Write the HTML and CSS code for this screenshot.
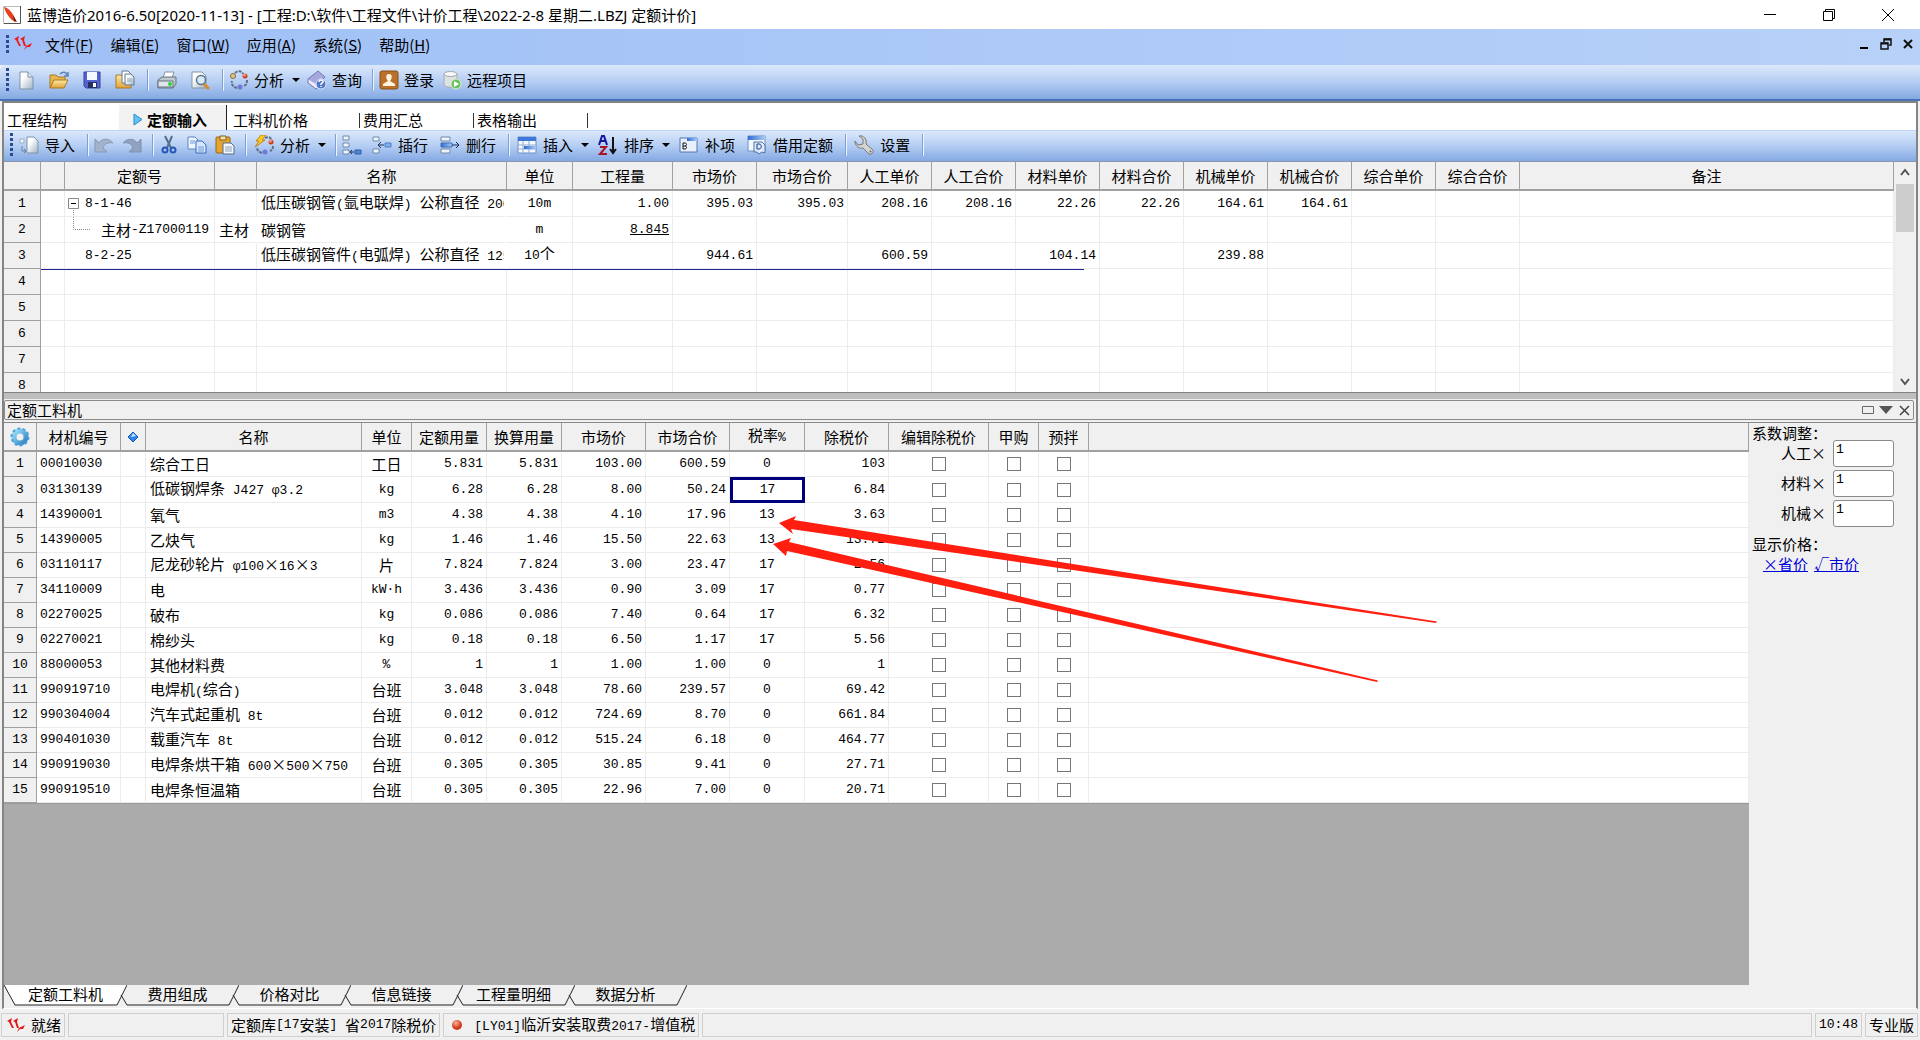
FILE: index.html
```html
<!DOCTYPE html>
<html lang="zh-CN">
<head>
<meta charset="utf-8">
<title>蓝博造价2016</title>
<link rel="stylesheet" href="styles.css">
</head>
<body>
<svg class="defs" width="0" height="0" aria-hidden="true">
  <defs>
    <linearGradient id="page" x1="0" y1="0" x2="1" y2="1"><stop offset=".3" stop-color="#fff"/><stop offset="1" stop-color="#9fb3c4"/></linearGradient>
    <linearGradient id="gold" x1="0" y1="0" x2="0" y2="1"><stop offset="0" stop-color="#ffe9a0"/><stop offset="1" stop-color="#e2a33a"/></linearGradient>
    <linearGradient id="blue" x1="0" y1="0" x2="1" y2="0"><stop offset="0" stop-color="#2f6bd0"/><stop offset="1" stop-color="#a9ccf5"/></linearGradient>
    <radialGradient id="ball" cx=".4" cy=".3"><stop offset="0" stop-color="#ffb59a"/><stop offset="1" stop-color="#cf3a1c"/></radialGradient>
    <linearGradient id="cog" x1="0" y1="0" x2="1" y2="1"><stop offset="0" stop-color="#9be0fa"/><stop offset="1" stop-color="#2f7fc4"/></linearGradient>
  </defs>
</svg>

<header class="titlebar">
  <svg class="app" viewBox="0 0 18 18"><path d="M.5.5h17v17H.5z" fill="#fff" stroke="#bbb"/><path d="M17.500 0v17.500H1" fill="none" stroke="#555"/><path d="M1 1c5 1 9 6 12 14l-1 1C7 13 3 8 1 1z" fill="#e8401c"/><path d="M10 9l4 7-3-1z" fill="#6b1d10"/></svg>
  <h1>蓝博造价2016-6.50[2020-11-13] - [工程:D:\软件\工程文件\计价工程\2022-2-8 星期二.LBZJ 定额计价]</h1>
  <div class="winbtns">
    <button aria-label="最小化"><svg viewBox="0 0 14 14"><path d="M1 6.500h12" stroke="#000"/></svg></button>
    <button aria-label="还原"><svg viewBox="0 0 14 14"><path d="M1.500 3.500h9v9h-9zM3.500 3V1.500h9v9H11" fill="none" stroke="#000"/></svg></button>
    <button aria-label="关闭"><svg viewBox="0 0 14 14"><path d="M1 1l12 12M13 1L1 13" stroke="#000"/></svg></button>
  </div>
</header>

<nav class="menubar">
  <span class="grip"></span>
  <svg class="logo" viewBox="0 0 18 16"><path d="M0 4l5-3-1 4 3 6h-2L2 5zM6 4l5-3-1 4 2 6h-2L8 5zM10 15l2-4 6-3-2 4-3 0z" fill="#f01818"/></svg>
  <button>文件(<u>F</u>)</button><button>编辑(<u>E</u>)</button><button>窗口(<u>W</u>)</button><button>应用(<u>A</u>)</button><button>系统(<u>S</u>)</button><button>帮助(<u>H</u>)</button>
  <div class="mdibtns">
    <button aria-label="最小化子窗口"><svg viewBox="0 0 12 12"><path d="M2 10h8" stroke="#000" stroke-width="2"/></svg></button>
    <button aria-label="还原子窗口"><svg viewBox="0 0 12 12"><path d="M4 4V1h7v6H9M1 5h7v6H1z" fill="none" stroke="#111" stroke-width="1.500"/><path d="M4 1.500h7M1 5.500h7" stroke="#111" stroke-width="2"/></svg></button>
    <button aria-label="关闭子窗口"><svg viewBox="0 0 12 12"><path d="M2 2l8 8M10 2l-8 8" stroke="#111" stroke-width="2"/></svg></button>
  </div>
</nav>

<div class="toolbar main">
  <span class="grip"></span>
  <button class="tool" aria-label="新建"><svg viewBox="0 0 20 20"><path d="M4 2h8l5 5v12H4z" fill="url(#page)" stroke="#7d93a8"/><path d="M12 2v5h5" fill="#dfe8f0" stroke="#7d93a8"/></svg></button>
  <button class="tool" aria-label="打开"><svg viewBox="0 0 20 20"><path d="M1 18V5h6l2 2h7v4" fill="#e9b64c" stroke="#a87a25"/><path d="M1 18l4-8h14l-4 8z" fill="url(#gold)" stroke="#a87a25"/><path d="M11 4c3-3 6-2 7 1m1-3v4h-4" fill="none" stroke="#5b83b5" stroke-width="1.500"/></svg></button>
  <button class="tool" aria-label="保存"><svg viewBox="0 0 20 20"><path d="M2 2h16v16H4l-2-2z" fill="#5662cf" stroke="#39419e"/><path d="M5 2h10v8H5z" fill="#f4f8ff"/><path d="M6 12h9v6H6z" fill="#26305f"/><path d="M11 13h3v4h-3z" fill="#fff"/></svg></button>
  <button class="tool" aria-label="另存"><svg viewBox="0 0 20 20"><path d="M1 18V5h5l2 2h8v11z" fill="url(#gold)" stroke="#a87a25"/><path d="M7 1h6l3 3v9H7z" fill="#fff" stroke="#66788c"/><path d="M10 4h6l3 3v8h-9z" fill="url(#page)" stroke="#66788c"/><path d="M12 9h5M12 11h5" stroke="#8fa5bb"/></svg></button>
  <span class="sep"></span>
  <button class="tool" aria-label="打印"><svg viewBox="0 0 20 20"><path d="M6 8l2-6h9l-2 6z" fill="#fff" stroke="#8495a5"/><path d="M1 10l4-3h14v7l-3 4H1z" fill="#bdc8d0" stroke="#65737f"/><path d="M1 11h15v6H1z" fill="#dfe5ea" stroke="#65737f"/><circle cx="13" cy="14" r="2" fill="#2fd43a"/></svg></button>
  <button class="tool" aria-label="打印预览"><svg viewBox="0 0 20 20"><path d="M2 2h10l4 4v12H2z" fill="url(#page)" stroke="#8495a5"/><circle cx="11" cy="10" r="4.500" fill="#d8ebf8" stroke="#5d7488" stroke-width="1.500"/><path d="M14 14l5 5" stroke="#d98a2b" stroke-width="3"/></svg></button>
  <span class="sep"></span>
  <button class="tool"><svg viewBox="0 0 20 20"><path d="M6 3c3-3 7-2 8 1M18 10c0 4-1 5-3 6M8 18c-4-1-6-4-5-7" fill="none" stroke="#5c6f88" stroke-width="2" stroke-dasharray="3 1"/><circle cx="4" cy="6" r="2.500" fill="#dfc58c" stroke="#8a6c38"/><circle cx="16" cy="6" r="2.500" fill="url(#ball)"/><circle cx="11" cy="17" r="2.500" fill="#7077d8"/></svg>分析</button><span class="drop"></span>
  <button class="tool"><svg viewBox="0 0 20 20"><path d="M1 9l10-8 7 6-9 9z" fill="#a5a8dc" stroke="#7478b2"/><path d="M1 9v4l8 6 3-3" fill="#e8eaf8" stroke="#7478b2"/><circle cx="14" cy="14" r="5" fill="#5275c8" stroke="#dfe8ff"/><path d="M12 12c0-3 5-2 4 0l-2 2v1m0 1v1" fill="none" stroke="#fff" stroke-width="1.500"/></svg>查询</button>
  <span class="sep"></span>
  <button class="tool"><svg viewBox="0 0 20 20"><rect x="1" y="1" width="18" height="18" rx="2" fill="#b9712c" stroke="#8d4e16"/><path d="M10 4c4 0 3 5 1 7l5 3v2H4v-2l5-3C7 9 6 4 10 4z" fill="#fff3df"/></svg>登录</button>
  <button class="tool"><svg viewBox="0 0 20 20"><path d="M2 4v11c2 3 11 3 13 0V4z" fill="#dfe2e4" stroke="#a4aaaf"/><ellipse cx="8.500" cy="4" rx="6.500" ry="2.500" fill="#f7f7f7" stroke="#a4aaaf"/><circle cx="14" cy="14" r="5" fill="#6fc060" stroke="#d9f0d0"/><path d="M12 11l5 3-5 3z" fill="#fff"/></svg>远程项目</button>
</div>

<main class="workspace">
  <nav class="tabs">
    <a href="#a">工程结构</a>
    <a href="#b" class="active"><svg viewBox="0 0 10 13"><path d="M1 1l8 5.500L1 12z" fill="#5ec6f5" stroke="#3484c6"/></svg>定额输入</a>
    <a href="#c" class="wide">工料机价格</a>
    <a href="#d">费用汇总</a>
    <a href="#e">表格输出</a>
  </nav>

  <div class="toolbar sub">
    <span class="grip"></span>
    <button class="tool"><svg viewBox="0 0 20 20"><path d="M8 2h7l4 4v12H8z" fill="url(#page)" stroke="#7d93a8"/><path d="M1 4h4v4H1z" fill="#eef4fb" stroke="#9eb0c4"/><path d="M3 11v5h4m-2-2l2 2-2 2" fill="none" stroke="#68809c"/></svg>导入</button>
    <span class="sep"></span>
    <button class="tool small" aria-label="撤销"><svg viewBox="0 0 20 20"><path d="M1 4v13h12l-4-4c1-4 5-6 10-5C15 3 8 3 5 8z" fill="#a3b3cc" stroke="#8798b2"/></svg></button>
    <button class="tool small" aria-label="重做"><svg viewBox="0 0 20 20"><path d="M19 4v13H7l4-4C10 9 6 7 1 8c4-5 11-5 14 0z" fill="#8fa2c0" stroke="#7f91ae"/></svg></button>
    <span class="sep"></span>
    <button class="tool small" aria-label="剪切"><svg viewBox="0 0 20 20"><path d="M6 1l6 12M13 1L8 13" stroke="#54708f" stroke-width="2"/><circle cx="6" cy="15" r="2.500" fill="none" stroke="#2758b8" stroke-width="2"/><circle cx="14" cy="15" r="2.500" fill="none" stroke="#2758b8" stroke-width="2"/></svg></button>
    <button class="tool small" aria-label="复制"><svg viewBox="0 0 20 20"><path d="M1 2h7l3 3v9H1z" fill="#eef5ff" stroke="#5b85c5"/><path d="M9 6h6l4 4v8H9z" fill="#d7e7ff" stroke="#3a68b5"/><path d="M3 6h5M3 8h5M11 12h6M11 14h6M11 16h6" stroke="#6f9ada"/></svg></button>
    <button class="tool small" aria-label="粘贴"><svg viewBox="0 0 20 20"><rect x="1" y="2" width="14" height="16" rx="1" fill="#e5a52c" stroke="#97661a"/><path d="M5 1h6v4H5z" fill="#f5e4a8" stroke="#7d6124"/><path d="M8 8h8l3 3v8H8z" fill="#f4f7fb" stroke="#566b88"/><path d="M10 12h7M10 14h7M10 16h7" stroke="#8ba0bc"/></svg></button>
    <span class="sep"></span>
    <button class="tool"><svg viewBox="0 0 20 20"><path d="M11 3c4-2 6 0 7 3M19 11c0 3-1 4-3 5M8 18c-3-1-5-3-5-5" fill="none" stroke="#5c6f88" stroke-width="2" stroke-dasharray="3 1"/><circle cx="17" cy="7" r="2.500" fill="url(#ball)"/><circle cx="11" cy="17" r="2.500" fill="#7077d8"/><path d="M7 0h5L8 5h3L1 12l4-6H2z" fill="#ffc928" stroke="#c0841a"/></svg>分析</button><span class="drop"></span>
    <span class="sep"></span>
    <button class="tool small" aria-label="插入子行"><svg viewBox="0 0 20 20"><path d="M1 1h6v4H1zM1 8h6v4H1zM1 15h6v4H1z" fill="#eef4fb" stroke="#7189a8"/><path d="M13 15h6v4h-6z" fill="#4d86da" stroke="#345d9d"/><path d="M12 17H8m2-2l-2 2 2 2" fill="none" stroke="#1c2f55"/></svg></button>
    <button class="tool"><svg viewBox="0 0 20 20"><path d="M1 2h6v4H1zM1 14h6v4H1z" fill="#eef4fb" stroke="#7189a8"/><path d="M13 8h6v4h-6z" fill="#7fb0ee" stroke="#4d7cc0"/><path d="M12 10H6m3-3l-3 3 3 3" fill="none" stroke="#1c2f55"/></svg>插行</button>
    <button class="tool"><svg viewBox="0 0 20 20"><path d="M1 2h9v4H1zM1 14h9v4H1z" fill="#eef4fb" stroke="#7189a8"/><path d="M1 8h11v4H1z" fill="url(#blue)" stroke="#3f6fba"/><path d="M12 10h7m-3-3l3 3-3 3" fill="none" stroke="#1c2f55"/></svg>删行</button>
    <span class="sep"></span>
    <button class="tool"><svg viewBox="0 0 20 20"><path d="M1 2h18v16H1z" fill="#f5f9ff" stroke="#6e8fc4"/><path d="M1 2h18v4H1z" fill="#3f78d8"/><path d="M6 6v12M12 6v12M1 10h18M1 14h18" stroke="#8fabd6"/><path d="M7 11h12v3H7z" fill="url(#blue)"/></svg>插入</button><span class="drop"></span>
    <button class="tool"><svg viewBox="0 0 20 20"><path d="M1 10l3-9h2l3 9M3 6h4" fill="none" stroke="#16169c" stroke-width="2"/><path d="M2 12h6l-6 7h7" fill="none" stroke="#a81426" stroke-width="2"/><path d="M15 2v16m-3-4l3 4 3-4" fill="none" stroke="#111" stroke-width="2"/></svg>排序</button><span class="drop"></span>
    <button class="tool"><svg viewBox="0 0 20 20"><path d="M1 3h17v14H1z" fill="#e8f0fc" stroke="#5276b4"/><path d="M8 3h10v3H8z" fill="url(#blue)"/><path d="M4 8v6h2c2 0 2-3 0-3 2 0 2-3 0-3zM4 11h2" fill="none" stroke="#111"/></svg>补项</button>
    <button class="tool"><svg viewBox="0 0 20 20"><path d="M1 1h17v15H1z" fill="#f3f7fd" stroke="#6e8fc4"/><path d="M1 1h17v4H1z" fill="url(#blue)"/><path d="M7 7h8l3 3v8l-3-1-3 2-2-2H7z" fill="#dceafb" stroke="#52739c"/><path d="M10 9v5h2c3 0 3-5 0-5z" fill="none" stroke="#1f3f8a"/></svg>借用定额</button>
    <span class="sep"></span>
    <button class="tool"><svg viewBox="0 0 20 20"><path d="M5 1l4 3v5L4 10 1 6c0 6 5 8 8 7l6 6c3 1 5-2 4-4l-7-6C13 4 10 0 5 1z" fill="#d4d4d2" stroke="#77797c"/><circle cx="16.500" cy="16.500" r="1" fill="#666"/></svg>设置</button>
    <span class="sep"></span>
  </div>

  <section class="quota">
    <div class="grid-wrap">
      <table class="grid top">
        <colgroup><col class="w37"><col class="w24"><col class="w150"><col class="w42"><col class="w250"><col class="w66"><col class="w100"><col class="w84"><col class="w91"><col class="w84"><col class="w84"><col class="w84"><col class="w84"><col class="w84"><col class="w84"><col class="w84"><col class="w84"><col></colgroup>
        <thead><tr><th></th><th></th><th>定额号</th><th></th><th>名称</th><th>单位</th><th>工程量</th><th>市场价</th><th>市场合价</th><th>人工单价</th><th>人工合价</th><th>材料单价</th><th>材料合价</th><th>机械单价</th><th>机械合价</th><th>综合单价</th><th>综合合价</th><th>备注</th></tr></thead>
        <tbody>
          <tr><th>1</th><td></td><td><div class="code"><svg viewBox="0 0 20 25"><path d="M3.500 7.500h10v10h-10z" fill="#fff" stroke="#888"/><path d="M6 12.500h5" stroke="#000"/><path d="M8.500 19v6" stroke="#888" stroke-dasharray="1 1"/></svg><span class="n">8-1-46</span></div></td><td></td><td class="name">低压碳钢管<span class="n">(</span>氩电联焊<span class="n">) </span>公称直径<span class="n"> 200</span></td><td class="c">10m</td><td class="r">1.00</td><td class="r">395.03</td><td class="r">395.03</td><td class="r">208.16</td><td class="r">208.16</td><td class="r">22.26</td><td class="r">22.26</td><td class="r">164.61</td><td class="r">164.61</td><td></td><td></td><td></td></tr>
          <tr><th>2</th><td></td><td><div class="code child"><svg viewBox="0 0 36 25"><path d="M8.500 0v12.500H26" fill="none" stroke="#888" stroke-dasharray="1 1"/></svg>主材<span class="n">-Z17000119</span></div></td><td class="name">主材</td><td class="name">碳钢管</td><td class="c">m</td><td class="r"><u>8.845</u></td><td></td><td></td><td></td><td></td><td></td><td></td><td></td><td></td><td></td><td></td><td></td></tr>
          <tr><th>3</th><td></td><td><div class="code"><svg viewBox="0 0 20 25"></svg><span class="n">8-2-25</span></div></td><td></td><td class="name">低压碳钢管件<span class="n">(</span>电弧焊<span class="n">) </span>公称直径<span class="n"> 125</span></td><td class="c"><span>10</span><span class="h">个</span></td><td></td><td class="r">944.61</td><td></td><td class="r">600.59</td><td></td><td class="r">104.14</td><td></td><td class="r">239.88</td><td></td><td></td><td></td><td></td></tr>
          <tr><th>4</th><td></td><td></td><td></td><td></td><td></td><td></td><td></td><td></td><td></td><td></td><td></td><td></td><td></td><td></td><td></td><td></td><td></td></tr>
          <tr><th>5</th><td></td><td></td><td></td><td></td><td></td><td></td><td></td><td></td><td></td><td></td><td></td><td></td><td></td><td></td><td></td><td></td><td></td></tr>
          <tr><th>6</th><td></td><td></td><td></td><td></td><td></td><td></td><td></td><td></td><td></td><td></td><td></td><td></td><td></td><td></td><td></td><td></td><td></td></tr>
          <tr><th>7</th><td></td><td></td><td></td><td></td><td></td><td></td><td></td><td></td><td></td><td></td><td></td><td></td><td></td><td></td><td></td><td></td><td></td></tr>
          <tr><th>8</th><td></td><td></td><td></td><td></td><td></td><td></td><td></td><td></td><td></td><td></td><td></td><td></td><td></td><td></td><td></td><td></td><td></td></tr>
        </tbody>
      </table>
      <div class="marker"></div>
    </div>
    <div class="scroll">
      <svg viewBox="0 0 20 20"><path d="M6 13l4-5 4 5" fill="none" stroke="#505050" stroke-width="2"/></svg>
      <div class="thumb"></div>
      <svg viewBox="0 0 20 20"><path d="M6 7l4 5 4-5" fill="none" stroke="#505050" stroke-width="2"/></svg>
    </div>
  </section>

  <div class="splitter"></div>
  <div class="dock"><h2>定额工料机</h2>
    <button aria-label="最大化"><svg viewBox="0 0 14 14"><path d="M1.500 3.500h11v7h-11z" fill="none" stroke="#666"/></svg></button>
    <button aria-label="选项"><svg viewBox="0 0 14 14"><path d="M0 3h14l-7 8z" fill="#555"/></svg></button>
    <button aria-label="关闭面板"><svg viewBox="0 0 14 14"><path d="M3 3l9 9M12 3l-9 9" stroke="#444" stroke-width="1.500"/></svg></button>
  </div>

  <section class="detail">
    <div class="detail-main">
      <table class="grid low">
        <colgroup><col class="w33"><col class="w84"><col class="w25"><col class="w216"><col class="w50"><col class="w75"><col class="w75"><col class="w84"><col class="w84"><col class="w75"><col class="w84"><col class="w100"><col class="w50"><col class="w50"><col></colgroup>
        <thead><tr><th><svg class="cog" viewBox="0 0 20 20"><circle cx="10" cy="10" r="6" fill="none" stroke="url(#cog)" stroke-width="5"/><circle cx="10" cy="10" r="8.500" fill="none" stroke="#4ba3dc" stroke-width="2" stroke-dasharray="3 2.300"/></svg></th><th>材机编号</th><th><svg class="gem" viewBox="0 0 12 12"><path d="M6 1l5 5-5 5-5-5z" fill="#2f86ea" stroke="#1855b8"/><path d="M6 2l3 3-5 1z" fill="#c4ebff"/></svg></th><th>名称</th><th>单位</th><th>定额用量</th><th>换算用量</th><th>市场价</th><th>市场合价</th><th>税率<span class="n">%</span></th><th>除税价</th><th>编辑除税价</th><th>甲购</th><th>预拌</th><th></th></tr></thead>
        <tbody>
          <tr><th>1</th><td class="l">00010030</td><td></td><td class="name">综合工日</td><td class="u">工日</td><td class="r">5.831</td><td class="r">5.831</td><td class="r">103.00</td><td class="r">600.59</td><td class="c">0</td><td class="r">103</td><td class="c"><input type="checkbox" aria-label="编辑除税价"></td><td class="c"><input type="checkbox" aria-label="甲购"></td><td class="c"><input type="checkbox" aria-label="预拌"></td><td></td></tr>
          <tr><th>3</th><td class="l">03130139</td><td></td><td class="name">低碳钢焊条<span class="n"> J427 φ3.2</span></td><td class="c">kg</td><td class="r">6.28</td><td class="r">6.28</td><td class="r">8.00</td><td class="r">50.24</td><td class="c cur">17</td><td class="r">6.84</td><td class="c"><input type="checkbox" aria-label="编辑除税价"></td><td class="c"><input type="checkbox" aria-label="甲购"></td><td class="c"><input type="checkbox" aria-label="预拌"></td><td></td></tr>
          <tr><th>4</th><td class="l">14390001</td><td></td><td class="name">氧气</td><td class="c">m3</td><td class="r">4.38</td><td class="r">4.38</td><td class="r">4.10</td><td class="r">17.96</td><td class="c">13</td><td class="r">3.63</td><td class="c"><input type="checkbox" aria-label="编辑除税价"></td><td class="c"><input type="checkbox" aria-label="甲购"></td><td class="c"><input type="checkbox" aria-label="预拌"></td><td></td></tr>
          <tr><th>5</th><td class="l">14390005</td><td></td><td class="name">乙炔气</td><td class="c">kg</td><td class="r">1.46</td><td class="r">1.46</td><td class="r">15.50</td><td class="r">22.63</td><td class="c">13</td><td class="r">13.72</td><td class="c"><input type="checkbox" aria-label="编辑除税价"></td><td class="c"><input type="checkbox" aria-label="甲购"></td><td class="c"><input type="checkbox" aria-label="预拌"></td><td></td></tr>
          <tr><th>6</th><td class="l">03110117</td><td></td><td class="name">尼龙砂轮片<span class="n"> φ100</span>×<span class="n">16</span>×<span class="n">3</span></td><td class="u">片</td><td class="r">7.824</td><td class="r">7.824</td><td class="r">3.00</td><td class="r">23.47</td><td class="c">17</td><td class="r">2.56</td><td class="c"><input type="checkbox" aria-label="编辑除税价"></td><td class="c"><input type="checkbox" aria-label="甲购"></td><td class="c"><input type="checkbox" aria-label="预拌"></td><td></td></tr>
          <tr><th>7</th><td class="l">34110009</td><td></td><td class="name">电</td><td class="c">kW·h</td><td class="r">3.436</td><td class="r">3.436</td><td class="r">0.90</td><td class="r">3.09</td><td class="c">17</td><td class="r">0.77</td><td class="c"><input type="checkbox" aria-label="编辑除税价"></td><td class="c"><input type="checkbox" aria-label="甲购"></td><td class="c"><input type="checkbox" aria-label="预拌"></td><td></td></tr>
          <tr><th>8</th><td class="l">02270025</td><td></td><td class="name">破布</td><td class="c">kg</td><td class="r">0.086</td><td class="r">0.086</td><td class="r">7.40</td><td class="r">0.64</td><td class="c">17</td><td class="r">6.32</td><td class="c"><input type="checkbox" aria-label="编辑除税价"></td><td class="c"><input type="checkbox" aria-label="甲购"></td><td class="c"><input type="checkbox" aria-label="预拌"></td><td></td></tr>
          <tr><th>9</th><td class="l">02270021</td><td></td><td class="name">棉纱头</td><td class="c">kg</td><td class="r">0.18</td><td class="r">0.18</td><td class="r">6.50</td><td class="r">1.17</td><td class="c">17</td><td class="r">5.56</td><td class="c"><input type="checkbox" aria-label="编辑除税价"></td><td class="c"><input type="checkbox" aria-label="甲购"></td><td class="c"><input type="checkbox" aria-label="预拌"></td><td></td></tr>
          <tr><th>10</th><td class="l">88000053</td><td></td><td class="name">其他材料费</td><td class="c">%</td><td class="r">1</td><td class="r">1</td><td class="r">1.00</td><td class="r">1.00</td><td class="c">0</td><td class="r">1</td><td class="c"><input type="checkbox" aria-label="编辑除税价"></td><td class="c"><input type="checkbox" aria-label="甲购"></td><td class="c"><input type="checkbox" aria-label="预拌"></td><td></td></tr>
          <tr><th>11</th><td class="l">990919710</td><td></td><td class="name">电焊机<span class="n">(</span>综合<span class="n">)</span></td><td class="u">台班</td><td class="r">3.048</td><td class="r">3.048</td><td class="r">78.60</td><td class="r">239.57</td><td class="c">0</td><td class="r">69.42</td><td class="c"><input type="checkbox" aria-label="编辑除税价"></td><td class="c"><input type="checkbox" aria-label="甲购"></td><td class="c"><input type="checkbox" aria-label="预拌"></td><td></td></tr>
          <tr><th>12</th><td class="l">990304004</td><td></td><td class="name">汽车式起重机<span class="n"> 8t</span></td><td class="u">台班</td><td class="r">0.012</td><td class="r">0.012</td><td class="r">724.69</td><td class="r">8.70</td><td class="c">0</td><td class="r">661.84</td><td class="c"><input type="checkbox" aria-label="编辑除税价"></td><td class="c"><input type="checkbox" aria-label="甲购"></td><td class="c"><input type="checkbox" aria-label="预拌"></td><td></td></tr>
          <tr><th>13</th><td class="l">990401030</td><td></td><td class="name">载重汽车<span class="n"> 8t</span></td><td class="u">台班</td><td class="r">0.012</td><td class="r">0.012</td><td class="r">515.24</td><td class="r">6.18</td><td class="c">0</td><td class="r">464.77</td><td class="c"><input type="checkbox" aria-label="编辑除税价"></td><td class="c"><input type="checkbox" aria-label="甲购"></td><td class="c"><input type="checkbox" aria-label="预拌"></td><td></td></tr>
          <tr><th>14</th><td class="l">990919030</td><td></td><td class="name">电焊条烘干箱<span class="n"> 600</span>×<span class="n">500</span>×<span class="n">750</span></td><td class="u">台班</td><td class="r">0.305</td><td class="r">0.305</td><td class="r">30.85</td><td class="r">9.41</td><td class="c">0</td><td class="r">27.71</td><td class="c"><input type="checkbox" aria-label="编辑除税价"></td><td class="c"><input type="checkbox" aria-label="甲购"></td><td class="c"><input type="checkbox" aria-label="预拌"></td><td></td></tr>
          <tr><th>15</th><td class="l">990919510</td><td></td><td class="name">电焊条恒温箱</td><td class="u">台班</td><td class="r">0.305</td><td class="r">0.305</td><td class="r">22.96</td><td class="r">7.00</td><td class="c">0</td><td class="r">20.71</td><td class="c"><input type="checkbox" aria-label="编辑除税价"></td><td class="c"><input type="checkbox" aria-label="甲购"></td><td class="c"><input type="checkbox" aria-label="预拌"></td><td></td></tr>
        </tbody>
      </table>
      <svg class="arrows" viewBox="770 510 680 180"><g fill="#ff1e10"><path d="M779 523L796 516 794 520 1437 621.500 1436 623 791 529 793 534z"/><path d="M773 544L791 538 789 542 1378 680.500 1377 682 787 551 786 556z"/></g></svg>
    </div>
    <aside class="side">
      <h3>系数调整：</h3>
      <div class="field"><label for="f1">人工×</label><input id="f1" value="1"></div>
      <div class="field"><label for="f2">材料×</label><input id="f2" value="1"></div>
      <div class="field"><label for="f3">机械×</label><input id="f3" value="1"></div>
      <h3 class="show">显示价格：</h3>
      <p><a href="#s">×省价</a><a href="#m">√市价</a></p>
    </aside>
  </section>

  <nav class="sheets">
    <button class="on"><svg viewBox="0 0 123 21"><path d="M0 0l11 20h102l10-20z" fill="#fff"/><path d="M0 0l11 20h102l10-20" fill="none" stroke="#222"/></svg><span>定额工料机</span></button>
    <button><svg viewBox="0 0 123 21"><path d="M5 10l6 10h102l10-20" fill="none" stroke="#222"/></svg><span>费用组成</span></button>
    <button><svg viewBox="0 0 123 21"><path d="M5 10l6 10h102l10-20" fill="none" stroke="#222"/></svg><span>价格对比</span></button>
    <button><svg viewBox="0 0 123 21"><path d="M5 10l6 10h102l10-20" fill="none" stroke="#222"/></svg><span>信息链接</span></button>
    <button><svg viewBox="0 0 123 21"><path d="M5 10l6 10h102l10-20" fill="none" stroke="#222"/></svg><span>工程量明细</span></button>
    <button><svg viewBox="0 0 123 21"><path d="M5 10l6 10h102l10-20" fill="none" stroke="#222"/></svg><span>数据分析</span></button>
  </nav>
</main>

<footer class="status">
  <div class="cell"><svg class="logo" viewBox="0 0 18 16"><path d="M0 4l5-3-1 4 3 6h-2L2 5zM6 4l5-3-1 4 2 6h-2L8 5zM10 15l2-4 6-3-2 4-3 0z" fill="#e01818"/></svg>就绪</div>
  <div class="cell blank"></div>
  <div class="cell">定额库<span class="n">[17</span>安装<span class="n">] </span>省<span class="n">2017</span>除税价</div>
  <div class="cell dot"><svg viewBox="0 0 12 12"><circle cx="6" cy="6" r="5" fill="url(#ball)"/></svg><span><span class="n">[LY01]</span>临沂安装取费<span class="n">2017-</span>增值税</span></div>
  <div class="cell grow"></div>
  <div class="cell"><span class="n">10:48</span></div>
  <div class="cell">专业版</div>
</footer>
</body>
</html>
```
FILE: styles.css
```css
* { box-sizing: border-box; }
body {
  margin: 0;
  min-height: 100vh;
  display: flex;
  flex-direction: column;
  background: #f0f0f0;
  color: #000;
  font: 15px/20px "Noto Sans CJK SC", sans-serif;
}
button {
  font: inherit;
  color: inherit;
  background: none;
  border: 0;
  padding: 0;
  white-space: nowrap;
}
svg { display: block; flex: none; }
.defs { position: absolute; }
h1, h2, h3, p { margin: 0; font-size: 15px; font-weight: 400; }
.n, .r, .c, .l { font-family: "Liberation Mono", "Noto Sans CJK SC", monospace; font-size: 13px; }
.n { white-space: pre; }
.h { font-size: 15px; }

/* title bar */
.titlebar { display: flex; align-items: center; height: 29px; background: #fff; padding-left: 3px; }
.titlebar .app { width: 18px; height: 18px; margin-right: 6px; }
.titlebar h1 { font-family: "Noto Sans", "Noto Sans CJK SC", sans-serif; }
.winbtns { margin-left: auto; display: flex; padding-right: 3px; }
.winbtns button { width: 59px; height: 29px; display: grid; place-items: center; }
.winbtns svg { width: 14px; height: 14px; }

/* menu */
.menubar {
  display: flex;
  align-items: flex-start;
  height: 36px;
  padding: 6px 6px 0;
  gap: 17px;
  background: linear-gradient(90deg, #9fbff6, #b7d1f8);
}
.menubar .grip { margin-right: -12px; }
.logo { width: 18px; height: 16px; }
.grip { width: 3px; height: 24px; flex: none; background: repeating-linear-gradient(#2c4c92 0 3px, transparent 3px 5px); }
.menubar .grip { height: 20px; }
.menubar .logo { margin-right: -4px; }
.mdibtns { margin-left: auto; display: flex; gap: 10px; padding-top: 3px; }
.mdibtns svg { width: 12px; height: 12px; }

/* toolbars */
.toolbar {
  display: flex;
  align-items: center;
  height: 36px;
  padding: 0 8px 4px 6px;
  background: linear-gradient(#dbe8fb, #b4cdf3 50%, #84a9e3);
}
.main { border-bottom: 2px solid #4a70b5; border-radius: 6px 0 0 0; }
.sub { height: 32px; border-top: 1px solid #bcd4f7; border-bottom: 1px solid #8c98a8; padding: 0 8px 2px 6px; }
.tool { display: flex; align-items: center; gap: 6px; padding: 0 6px; }
.tool svg { width: 20px; height: 20px; }
.main .tool { gap: 5px; padding: 0 4px; }
.main .tool[aria-label] { padding: 0 6px 0 7px; }
.sub .small { padding: 0 4px; }
.sep { width: 2px; height: 22px; margin: 0 1px 0 6px; flex: none; background: linear-gradient(90deg, #7c9fd6 50%, #eef5ff 50%); }
.drop { width: 13px; height: 4px; flex: none; }
.main .drop { width: 15px; padding-left: 2px; }
.drop::before { content: ""; display: block; width: 0; margin-left: 2px; border: 4px solid transparent; border-top-color: #000; border-bottom: 0; }

/* workspace */
.workspace { flex: 1; display: flex; flex-direction: column; margin: 0 2px; border: 2px solid #848484; border-bottom: 1px solid #fff; min-height: 0; }
.tabs { display: flex; height: 27px; padding-top: 2px; background: #fff; flex: none; }
.tabs a { width: 114px; padding: 5px 0 0 3px; color: #000; text-decoration: none; position: relative; }
.tabs a:first-child { width: 115px; }
.tabs a:nth-child(n+3)::after { content: ""; position: absolute; right: 0; top: 8px; width: 1px; height: 15px; background: #333; }
.tabs .active { width: 108px; display: flex; gap: 4px; padding-left: 14px; background: #f2f2f2; border-right: 1px solid #222; font-weight: 700; }
.tabs .active svg { width: 10px; height: 13px; margin-top: 3px; }
.tabs .wide { width: 133px; padding-left: 6px; }

/* grids */
.quota { display: flex; height: 230px; flex: none; background: #fff; }
.grid-wrap { flex: 1; min-width: 0; overflow: hidden; position: relative; }
.grid { width: 100%; table-layout: fixed; border-collapse: separate; border-spacing: 0; background: #fff; }
.grid th, .grid td { height: 26px; padding: 0; overflow: hidden; white-space: nowrap; border-right: 1px solid #ececec; border-bottom: 1px solid #ececec; }
.low tbody th, .low td { height: 25px; }
.grid th { background: #f0f0f0; font-weight: 400; border-color: #a0a0a0; text-align: center; }
.grid thead th { height: 29px; border-bottom-width: 2px; }
.grid tbody th { font-family: "Liberation Mono", monospace; font-size: 13px; }
.r { text-align: right; }
.grid td.r { padding-right: 3px; }
.c, .u { text-align: center; }
.grid td.l { padding-left: 3px; }
.grid td.name { padding-left: 4px; }
.top td.name { border-right: 3px solid #fff; }
.code { display: flex; align-items: center; height: 25px; }
.code svg { width: 20px; height: 25px; }
.child svg { width: 36px; }
.low { border-bottom: 1px solid #999; }
.cog { width: 20px; height: 20px; margin: auto; }
.gem { width: 12px; height: 12px; margin: auto; }
.grid .cur { border: 3px solid #00007c; }
.grid input { appearance: none; display: block; width: 14px; height: 14px; margin: 0 auto; border: 1px solid #777; background: #fff; }
.marker { position: absolute; left: 37px; top: 107px; width: 1043px; height: 1px; background: #20209a; }
.w24 { width: 24px; } .w25 { width: 25px; } .w33 { width: 33px; } .w37 { width: 37px; } .w42 { width: 42px; } .w50 { width: 50px; }
.w66 { width: 66px; } .w75 { width: 75px; } .w84 { width: 84px; } .w91 { width: 91px; } .w100 { width: 100px; }
.w150 { width: 150px; } .w216 { width: 216px; } .w250 { width: 250px; }
.scroll { width: 22px; background: #f0f0f0; display: flex; flex-direction: column; align-items: center; }
.scroll svg { width: 20px; height: 20px; }
.thumb { width: 18px; height: 48px; background: #cdcdcd; margin: 2px 0 auto; }

/* dock caption */
.splitter { height: 7px; flex: none; background: #bfbfbf; border-top: 1px solid #808080; }
.dock { display: flex; align-items: center; gap: 4px; height: 20px; margin: 1px 2px 2px 0; padding: 0 2px; flex: none; border: 1px solid #8a8a8a; border-radius: 2px; }
.dock h2 { margin-right: auto; }
.dock svg { width: 14px; height: 14px; }

/* details */
.detail { flex: 1; display: flex; border-top: 1px solid #888; }
.detail-main { flex: 1; min-width: 0; background: #ababab; position: relative; }
.arrows { position: absolute; left: 766px; top: 87px; width: 680px; height: 180px; }
.side { width: 167px; padding: 1px 22px 0 3px; }
.field { display: flex; justify-content: flex-end; gap: 7px; margin-bottom: 3px; }
.field label { line-height: 26px; }
.field input { width: 61px; height: 27px; border: 1px solid #8a8a8a; border-radius: 3px; background: #fff; padding: 0 2px 8px; font: 13px "Liberation Mono", monospace; }
.side h3 { height: 16px; line-height: 18px; }
.side .show { height: 19px; margin-top: 8px; }
.side p { display: flex; gap: 6px; padding-left: 11px; }
.side p a { color: #0000d8; }

/* sheet tabs */
.sheets { display: flex; height: 21px; margin-bottom: 2px; flex: none; }
.sheets button { width: 123px; height: 21px; margin-right: -11px; display: grid; }
.sheets svg { width: 123px; height: 21px; }
.sheets svg, .sheets span { grid-area: 1 / 1; }
.sheets span { line-height: 18px; position: relative; }

/* status bar */
.status { display: flex; gap: 3px; height: 31px; padding: 4px 2px 3px 1px; flex: none; }
.cell { display: flex; align-items: center; border: 1px solid #cfcfcf; padding: 0 3px; white-space: nowrap; }
.cell .logo { margin: 0 6px 0 2px; }
.cell.blank { width: 156px; }
.cell.dot svg { width: 12px; height: 12px; margin: 0 11px 0 4px; }
.cell.grow { flex: 1; }
```
